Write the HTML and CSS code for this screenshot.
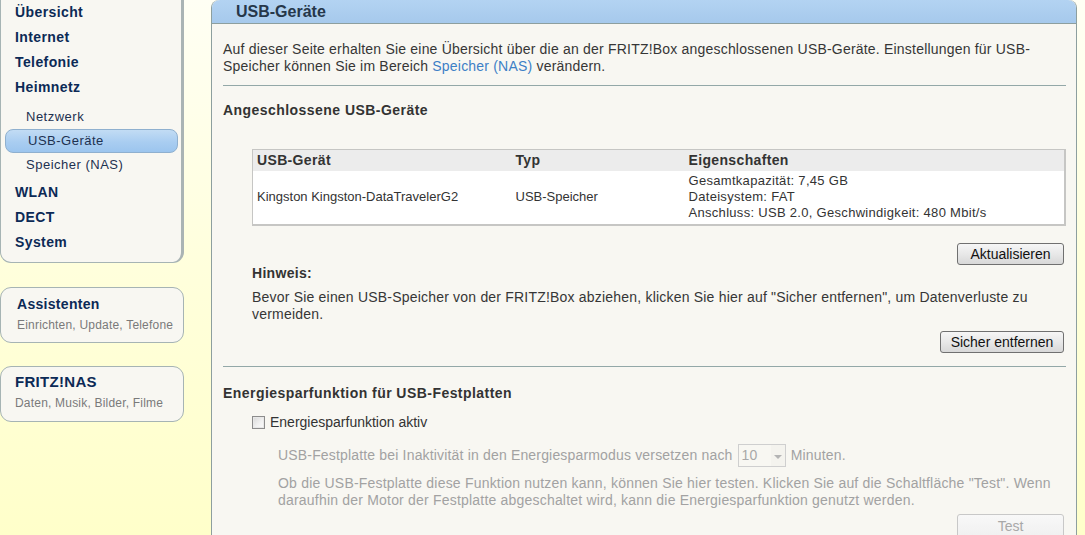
FILE: index.html
```html
<!DOCTYPE html>
<html lang="de">
<head>
<meta charset="utf-8">
<title>USB-Geräte</title>
<link rel="stylesheet" href="styles.css">
</head>
<body>
<div class="page">
  <aside class="sidebar">
    <nav class="navbox">
      <div class="nav-main">Übersicht</div>
      <div class="nav-main">Internet</div>
      <div class="nav-main">Telefonie</div>
      <div class="nav-main">Heimnetz</div>
      <div class="nav-sub-list">
        <div class="nav-sub">Netzwerk</div>
        <div class="nav-sub active">USB-Geräte</div>
        <div class="nav-sub">Speicher (NAS)</div>
      </div>
      <div class="nav-main">WLAN</div>
      <div class="nav-main">DECT</div>
      <div class="nav-main">System</div>
    </nav>
    <div class="sidebox sidebox-a">
      <div class="sidebox-title">Assistenten</div>
      <div class="sidebox-sub">Einrichten, Update, Telefone</div>
    </div>
    <div class="sidebox sidebox-b">
      <div class="sidebox-title">FRITZ!NAS</div>
      <div class="sidebox-sub">Daten, Musik, Bilder, Filme</div>
    </div>
  </aside>

  <main class="panel">
    <header class="panel-head">USB-Geräte</header>
    <div class="panel-body">
      <p class="intro">Auf dieser Seite erhalten Sie eine Übersicht über die an der FRITZ!Box angeschlossenen USB-Geräte. Einstellungen für USB-Speicher können Sie im Bereich <a class="link" href="#">Speicher (NAS)</a> verändern.</p>
      <hr class="sep sep-1">
      <h2 class="section-title st-1">Angeschlossene USB-Geräte</h2>
      <div class="indent">
        <table class="devtable">
          <thead>
            <tr><th class="c1">USB-Gerät</th><th class="c2">Typ</th><th class="c3">Eigenschaften</th></tr>
          </thead>
          <tbody>
            <tr>
              <td class="c1">Kingston Kingston-DataTravelerG2</td>
              <td class="c2">USB-Speicher</td>
              <td class="c3">Gesamtkapazität: 7,45 GB<br>Dateisystem: FAT<br>Anschluss: USB 2.0, Geschwindigkeit: 480 Mbit/s</td>
            </tr>
          </tbody>
        </table>
        <div class="btnrow btnrow-1"><button class="btn btn-akt">Aktualisieren</button></div>
        <div class="hint-title">Hinweis:</div>
        <p class="hint-text">Bevor Sie einen USB-Speicher von der FRITZ!Box abziehen, klicken Sie hier auf "Sicher entfernen", um Datenverluste zu vermeiden.</p>
        <div class="btnrow btnrow-2"><button class="btn btn-sich">Sicher entfernen</button></div>
      </div>
      <hr class="sep sep-2">
      <h2 class="section-title st-2">Energiesparfunktion für USB-Festplatten</h2>
      <div class="indent">
        <label class="check-row"><span class="checkbox"></span><span>Energiesparfunktion aktiv</span></label>
        <div class="sub-indent">
          <div class="disabled-line">USB-Festplatte bei Inaktivität in den Energiesparmodus versetzen nach <span class="select"><span class="select-val">10</span><span class="select-arrow"></span></span> Minuten.</div>
          <p class="disabled-para">Ob die USB-Festplatte diese Funktion nutzen kann, können Sie hier testen. Klicken Sie auf die Schaltfläche "Test". Wenn daraufhin der Motor der Festplatte abgeschaltet wird, kann die Energiesparfunktion genutzt werden.</p>
          <div class="btnrow btnrow-3"><button class="btn btn-test" disabled>Test</button></div>
        </div>
      </div>
    </div>
  </main>
</div>
</body>
</html>
```

FILE: styles.css
```css
* { box-sizing: border-box; }

html, body {
  margin: 0;
  padding: 0;
  height: 100%;
  overflow: hidden;
}

body {
  font-family: "Liberation Sans", Arial, sans-serif;
  background: linear-gradient(to bottom, #fffff4 0%, #ffffdc 50%, #ffffca 100%);
  color: #333;
}

.page {
  display: flex;
  align-items: flex-start;
  gap: 27px;
  width: 1085px;
}

/* ---------- Sidebar ---------- */
.sidebar {
  width: 184px;
  flex: 0 0 184px;
  display: flex;
  flex-direction: column;
}

.navbox {
  margin-top: -10px;
  padding: 8.5px 0 6.5px 0;
  background: #f8f7f2;
  border: 1px solid #a6b4b4;
  border-right: 3px solid #aab4b4;
  border-radius: 11px;
}

.nav-main {
  height: 25px;
  line-height: 25px;
  padding-left: 14px;
  font-size: 14px;
  font-weight: bold;
  letter-spacing: 0.4px;
  color: #0c2a56;
}

.nav-sub-list {
  margin: 5px 0 3.5px;
}

.nav-sub {
  height: 24px;
  line-height: 24px;
  padding-left: 25px;
  font-size: 13px;
  letter-spacing: 0.5px;
  color: #1d3150;
}

.nav-sub.active {
  margin: 0 3px 0 4px;
  padding-left: 22px;
  border: 1px solid #8fb0cf;
  border-radius: 8px;
  line-height: 22px;
  background: linear-gradient(to bottom, #c2dcf4 0%, #a9cdf1 55%, #9cc5ee 100%);
}

.sidebox {
  background: #f8f7f2;
  border: 1px solid #a6b4b4;
  border-radius: 11px;
  height: 56px;
  padding-top: 6px;
}

.sidebox-a { margin-top: 24px; padding-left: 16px; }
.sidebox-b { margin-top: 23px; padding-left: 14px; padding-top: 5px; }

.sidebox-title {
  font-size: 14px;
  font-weight: bold;
  letter-spacing: 0.3px;
  color: #0c2a56;
  line-height: 20px;
}

.sidebox-b .sidebox-title { font-size: 15px; }

.sidebox-sub {
  margin-top: 2px;
  font-size: 12px;
  letter-spacing: 0.2px;
  color: #7a7a7a;
  line-height: 18px;
}

/* ---------- Main panel ---------- */
.panel {
  width: 866px;
  flex: 0 0 866px;
  height: 560px;
  background: #f8f7f2;
  border: 1px solid #8d9f9f;
  border-top: none;
  border-radius: 8px 8px 0 0;
}

.panel-head {
  height: 24px;
  line-height: 23px;
  padding-left: 24px;
  font-size: 16px;
  font-weight: bold;
  color: #26374a;
  background: linear-gradient(to bottom, #b3d3f2 0%, #a6c9ec 100%);
  border-bottom: 1px solid #8d9f9f;
  border-radius: 8px 8px 0 0;
}

.panel-body {
  padding: 0 10px 0 11px;
}

.intro {
  margin: 17px 0 0;
  font-size: 14px;
  line-height: 17px;
  letter-spacing: 0.2px;
  color: #363636;
}

.link {
  color: #3d80c6;
  text-decoration: none;
}

.sep {
  margin: 0;
  border: none;
  border-top: 1px solid #93a8a8;
  height: 0;
}

.sep-1 { margin-top: 10px; }
.sep-2 { margin-top: 13px; }

.section-title {
  margin: 0;
  font-size: 14px;
  font-weight: bold;
  line-height: 17px;
  letter-spacing: 0.45px;
  color: #333;
}

.st-1 { margin-top: 15.5px; }
.st-2 { margin-top: 18px; }

.indent {
  padding-left: 29px;
}

/* table */
.devtable {
  margin-top: 30px;
  width: 100%;
  border-collapse: collapse;
  border: 1px solid #c6c6c4;
  border-right: 2px solid #c6c6c4;
  border-bottom: 2px solid #c6c6c4;
  background: #fff;
}

.devtable th {
  height: 22px;
  padding: 0 4px;
  text-align: left;
  font-size: 14px;
  font-weight: bold;
  letter-spacing: 0.35px;
  color: #333;
  background: #ececec;
}

.devtable td {
  height: 53px;
  padding: 2px 4px 3px;
  font-size: 13px;
  line-height: 16px;
  color: #333;
  vertical-align: middle;
}

.devtable td.c3 { letter-spacing: 0.3px; }

.devtable .c1 { width: 259px; }
.devtable .c2 { width: 173px; }

/* buttons */
.btnrow {
  display: flex;
  justify-content: flex-end;
  padding-right: 2px;
}

.btnrow-1 { margin-top: 17px; }
.btnrow-2 { margin-top: 7.5px; }
.btnrow-3 { margin-top: 5.5px; }

.btn {
  font-family: "Liberation Sans", Arial, sans-serif;
  font-size: 14px;
  height: 22px;
  padding: 0;
  color: #111;
  background: linear-gradient(to bottom, #f6f6f6 0%, #e8e8e8 50%, #d8d8d8 100%);
  border: 1px solid #707070;
  border-radius: 3px;
  line-height: 20px;
}

.btn-akt { width: 107px; }
.btn-sich { width: 124px; }
.btn-test {
  width: 107px;
  height: 24px;
  color: #a8a8a8;
  border-color: #c8c8c8;
  background: linear-gradient(to bottom, #f8f8f8 0%, #f0f0f0 100%);
}

.hint-title {
  font-size: 14px;
  font-weight: bold;
  line-height: 17px;
  letter-spacing: 0.3px;
  color: #333;
}

.hint-text {
  margin: 7px 0 0;
  font-size: 14px;
  line-height: 17px;
  letter-spacing: 0.2px;
  color: #363636;
}

/* energy */
.check-row {
  display: flex;
  align-items: center;
  gap: 5px;
  margin-top: 12px;
  font-size: 14px;
  line-height: 17px;
  color: #333;
}

.checkbox {
  width: 13px;
  height: 13px;
  border: 1px solid #8c8c8c;
  background: linear-gradient(135deg, #d8d8d8 0%, #f2f2f2 60%, #fafafa 100%);
  box-shadow: inset 0 0 0 1px #e8e8e8;
}

.sub-indent {
  padding-left: 26px;
}

.disabled-line {
  margin-top: 13px;
  font-size: 14px;
  line-height: 23px;
  letter-spacing: 0.17px;
  color: #a2a2a2;
  display: flex;
  align-items: center;
  gap: 1px;
  white-space: pre;
}

.select {
  display: inline-flex;
  align-items: center;
  width: 48px;
  height: 23px;
  border: 1px solid #cfcfcf;
  background: #f8f7f2;
}

.select-val {
  flex: 1;
  padding-left: 3px;
  color: #a8a8a8;
}

.select-arrow {
  width: 14px;
  height: 100%;
  position: relative;
  background: #f4f3ee;
}

.select-arrow::after {
  content: "";
  position: absolute;
  left: 3px;
  top: 10px;
  border-left: 4px solid transparent;
  border-right: 4px solid transparent;
  border-top: 4px solid #b4b4b4;
}

.disabled-para {
  margin: 8px 0 0;
  font-size: 14px;
  line-height: 17px;
  letter-spacing: 0.2px;
  color: #a2a2a2;
}
```
